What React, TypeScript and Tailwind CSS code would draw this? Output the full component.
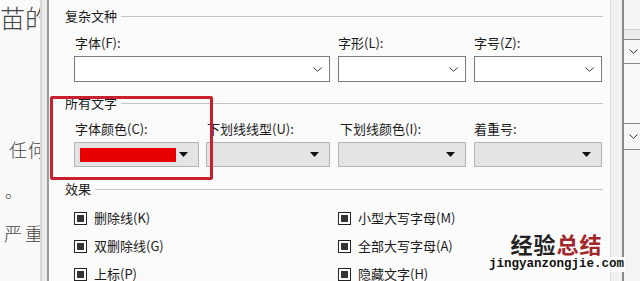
const cjk = { fontFamily: '"Noto Sans CJK SC", "Noto Sans", sans-serif' }

function Chevron() {
  return (
    <svg width="9" height="5" viewBox="0 0 9 5" className="shrink-0">
      <path d="M0.5 0.5 L4.5 4.3 L8.5 0.5" fill="none" stroke="#333" strokeWidth="1" />
    </svg>
  )
}

function Caret() {
  return (
    <svg width="9" height="5" viewBox="0 0 9 5" className="shrink-0">
      <path d="M0 0 H9 L4.5 5 Z" fill="#111" />
    </svg>
  )
}

function Legend({ title, className = '' }: { title: string; className?: string }) {
  return (
    <div className={`flex h-[20px] items-center gap-[4px] pl-[16px] ${className}`}>
      <span className="text-[13px] leading-[20px] text-[#1a1a1a]">{title}</span>
      <div className="h-px flex-1 bg-[#c4c4c4]" />
    </div>
  )
}

function Select({ width }: { width: number }) {
  return (
    <div
      className="flex h-[26px] items-center justify-end border border-[#7a7a7a] bg-white pr-[7px]"
      style={{ width }}
    >
      <Chevron />
    </div>
  )
}

function GreySelect({ width, color }: { width: number; color?: boolean }) {
  return (
    <div
      className="flex h-[25px] items-center border border-[#b4b4b4] bg-[#e4e4e4] pl-[5px] pr-[10px]"
      style={{ width }}
    >
      {color ? <div className="h-[14px] w-[96px] bg-[#e60000]" /> : null}
      <div className="flex-1" />
      <Caret />
    </div>
  )
}

function Check({ label }: { label: string }) {
  return (
    <div className="flex h-[20px] items-center gap-[7px]">
      <div className="h-[13px] w-[13px] border border-[#222] bg-white p-[2px]">
        <div className="h-full w-full bg-[#333]" />
      </div>
      <span className="text-[13px] leading-[20px] text-[#1a1a1a]">{label}</span>
    </div>
  )
}

export default function App() {
  return (
    <div className="relative flex h-[281px] w-[640px] overflow-hidden bg-white" style={cjk}>
      {/* document behind the dialog, clipped by the dialog edge */}
      <div className="relative w-[40px] shrink-0 overflow-hidden bg-[#fafafa] font-light text-[#444]">
        <div className="absolute left-0 top-[1px] whitespace-nowrap text-[25px] leading-[32px]">苗的</div>
        <div className="absolute left-[9px] top-[136px] whitespace-nowrap text-[18px] leading-[26px] tracking-[1px]">任何</div>
        <div className="absolute left-[5px] top-[179px] text-[17px] leading-[24px]">。</div>
        <div className="absolute left-[4px] top-[220px] whitespace-nowrap text-[18px] leading-[26px] tracking-[3px]">严重</div>
      </div>
      <div className="w-[2px] shrink-0 bg-[#d8d8d8]" />
      <div className="w-[5px] shrink-0 bg-[#ebebeb]" />
      <div className="w-[2px] shrink-0 bg-[#9c9c9c]" />

      {/* font dialog */}
      <div className="flex w-[561px] shrink-0 flex-col bg-[#fbfbfb] pr-[7px] text-[#1a1a1a]">
        <Legend title="复杂文种" className="mt-[6px]" />
        <div className="ml-[25px] mt-[9px] flex gap-[8px] text-[13px] leading-[16px]">
          <span className="w-[256px] pl-[1px]">字体(F):</span>
          <span className="w-[128px]">字形(L):</span>
          <span className="w-[128px]">字号(Z):</span>
        </div>
        <div className="ml-[25px] mt-[5px] flex gap-[8px]">
          <Select width={256} />
          <Select width={128} />
          <Select width={128} />
        </div>

        <Legend title="所有文字" className="mt-[11px]" />
        <div className="ml-[25px] mt-[8px] flex text-[13px] leading-[16px]">
          <span className="w-[132px] pl-[1px]">字体颜色(C):</span>
          <span className="w-[132px] pl-[1px]">下划线线型(U):</span>
          <span className="w-[136px] pl-[2px]">下划线颜色(I):</span>
          <span className="w-[128px]">着重号:</span>
        </div>
        <div className="ml-[25px] mt-[5px] flex">
          <GreySelect width={125} color />
          <div className="w-[7px]" />
          <GreySelect width={124} />
          <div className="w-[8px]" />
          <GreySelect width={128} />
          <div className="w-[8px]" />
          <GreySelect width={128} />
        </div>

        <Legend title="效果" className="mt-[12px]" />
        <div className="ml-[25px] mt-[9px] grid grid-cols-[264px_1fr] gap-y-[8px]">
          <Check label="删除线(K)" />
          <Check label="小型大写字母(M)" />
          <Check label="双删除线(G)" />
          <Check label="全部大写字母(A)" />
          <Check label="上标(P)" />
          <Check label="隐藏文字(H)" />
        </div>
      </div>

      {/* neighbouring pane on the right */}
      <div className="w-[1px] shrink-0 bg-[#dedede]" />
      <div className="w-[11px] shrink-0 bg-[#f1f1f1]" />
      <div className="w-[2px] shrink-0 bg-[#8a8a8a]" />
      <div className="flex flex-1 flex-col bg-[#f7f7f7]">
        <div className="h-[29px] bg-[#f4f4f4]" />
        <div className="h-px bg-[#cfcfcf]" />
        <div className="h-[9px] bg-[#ececec]" />
        <div className="h-px bg-[#8a8a8a]" />
        <div className="flex h-[23px] items-center pl-[5px]">
          <Chevron />
        </div>
        <div className="h-px bg-[#8a8a8a]" />
        <div className="h-[59px] bg-[#fafafa]" />
        <div className="h-px bg-[#8a8a8a]" />
        <div className="flex h-[25px] items-center pl-[5px]">
          <Chevron />
        </div>
        <div className="h-px bg-[#8a8a8a]" />
        <div className="flex-1 bg-[#f4f4f4]" />
      </div>

      {/* red highlight around the font colour field */}
      <div className="absolute left-[50px] top-[96px] h-[84px] w-[163px] rounded-[2px] border-[3px] border-[#c8202c]" />

      {/* watermark */}
      <div className="absolute left-[488px] top-[231px] flex flex-col items-center">
        <div className="text-[22px] font-bold leading-[25px] tracking-[1px]">
          <span className="text-[#222]">经验</span>
          <span className="text-[#a3262a]">总结</span>
        </div>
        <div
          className="mt-[1px] bg-white px-[1px] text-[12.5px] font-bold leading-[15px] text-[#111]"
          style={{ fontFamily: '"Liberation Mono", monospace' }}
        >
          jingyanzongjie.com
        </div>
      </div>
    </div>
  )
}
